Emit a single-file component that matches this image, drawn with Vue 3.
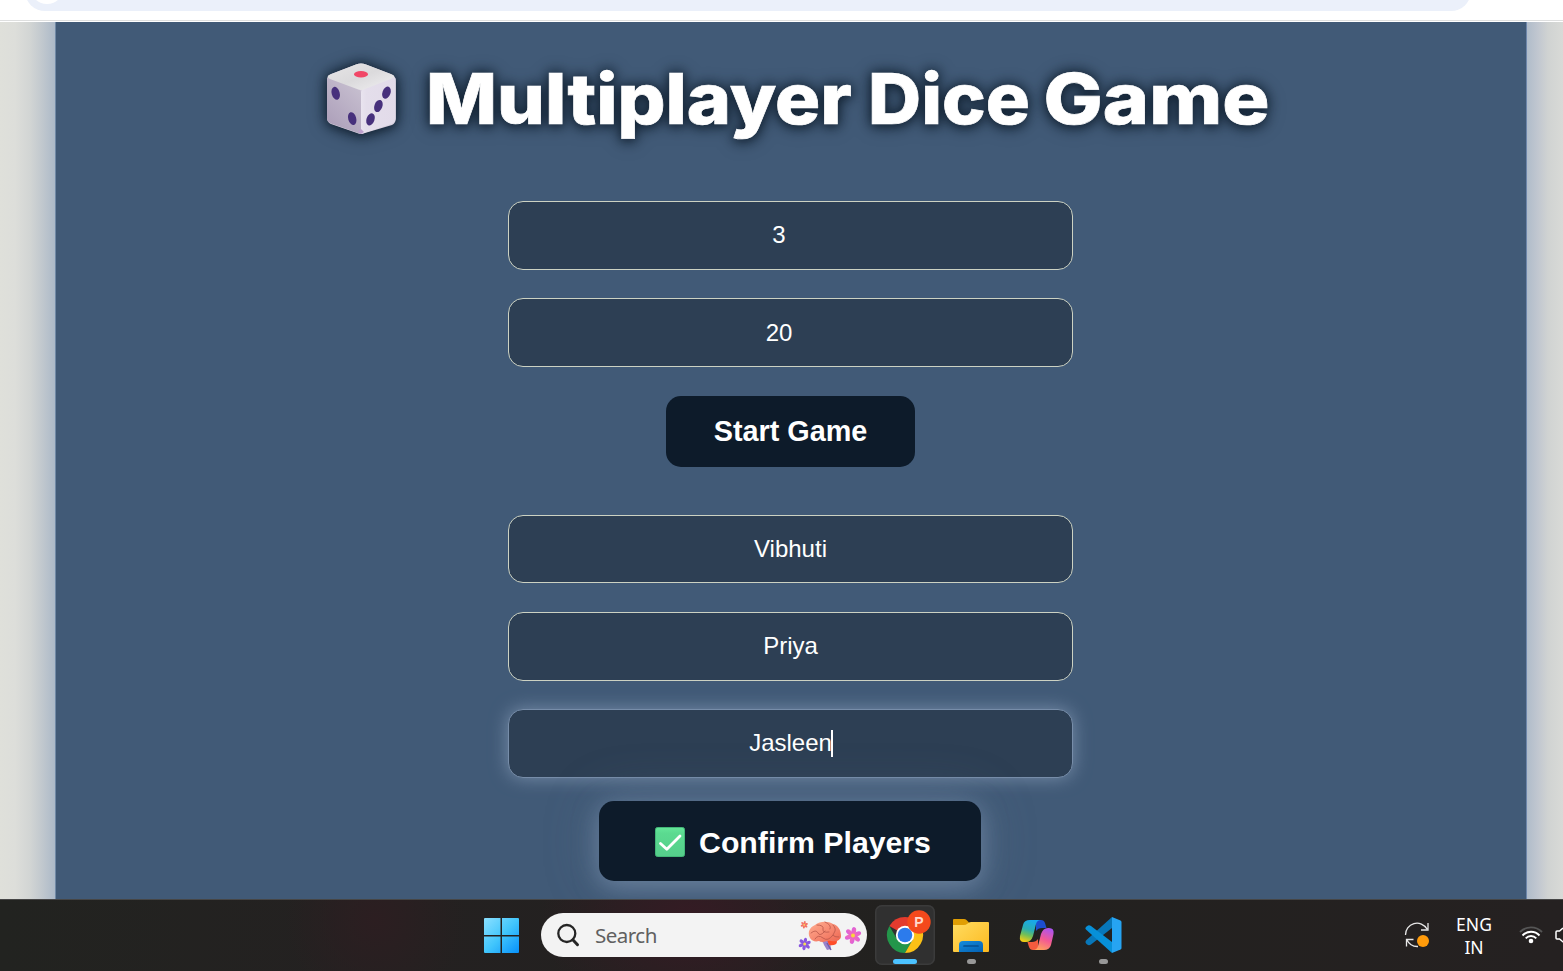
<script setup>
const settings = ['3', '20']
const players = ['Vibhuti', 'Priya', 'Jasleen']
</script>

<template>
  <div class="screen">
    <header class="browser"><div class="omnibox"><i class="site-info"></i></div></header>

    <main class="page">
      <div class="edge left"></div>
      <section class="game">
        <h1 class="title">
          <svg width="960" height="110" viewBox="320 40 960 110">
            <defs>
              <linearGradient id="dTop" x1="0" y1="0" x2="1" y2="1"><stop offset="0" stop-color="#e6e5e6"/><stop offset=".5" stop-color="#dbdadc"/><stop offset="1" stop-color="#f1f0f2"/></linearGradient>
              <linearGradient id="dLeft" x1="1" y1="0" x2=".4" y2="1"><stop offset="0" stop-color="#cbc4d3"/><stop offset="1" stop-color="#aea1bb"/></linearGradient>
              <linearGradient id="dRight" x1="0" y1="0" x2="1" y2="0"><stop offset="0" stop-color="#e9e4ef"/><stop offset=".15" stop-color="#e4deeb"/><stop offset="1" stop-color="#e2dbe9"/></linearGradient>
            </defs>
            <g class="die">
              <path d="M331 74 356 64.500Q361 62.500 366 64.500L391 74Q395.700 76 395.700 81V119Q395.700 123 392 125L365 133Q361 135 357 133L331 124Q327 122 327 118V80Q327 76 331 74Z" fill="#d8d1df"/>
              <path d="M327 79Q327 77 329 77L358 87.500Q361 89 361 93V134L331 123.500Q327 122 327 118Z" fill="url(#dLeft)"/>
              <path d="M395.700 79Q395.700 77 393 77L364 88Q361 89.500 361 93V134L391 124Q395.700 122 395.700 118Z" fill="url(#dRight)"/>
              <path d="M329 75 356 64.500Q361 62.500 366 64.500L393 75Q396 77 392 78.500L365 89Q361 91 357 89L330 79Q326 77 329 75Z" fill="url(#dTop)"/>
              <path d="M358 131.500 361 129 364 132 361 134Z" fill="#bda0cd"/>
              <ellipse cx="361" cy="74.300" rx="7" ry="3.200" fill="#f14767"/>
              <g fill="#47307c">
                <ellipse cx="335.700" cy="93.300" rx="4" ry="6.600" transform="rotate(-16 335.700 93.300)"/>
                <ellipse cx="352.200" cy="118.600" rx="4" ry="6.600" transform="rotate(-16 352.200 118.600)"/>
                <ellipse cx="386.500" cy="92.700" rx="4" ry="6.300" transform="rotate(20 386.500 92.700)"/>
                <ellipse cx="378.400" cy="106" rx="4" ry="6.300" transform="rotate(20 378.400 106)"/>
                <ellipse cx="370.500" cy="119.300" rx="4" ry="6.300" transform="rotate(20 370.500 119.300)"/>
              </g>
            </g>
            <g class="words">
              <text x="426" y="124" textLength="426" lengthAdjust="spacingAndGlyphs">Multiplayer</text>
              <text x="868" y="124" textLength="162" lengthAdjust="spacingAndGlyphs">Dice</text>
              <text x="1043.500" y="124" textLength="226" lengthAdjust="spacingAndGlyphs">Game</text>
            </g>
          </svg>
        </h1>

        <div class="group settings">
          <div v-for="s in settings" :key="s" class="field number">{{ s }}</div>
        </div>
        <button class="btn start">Start Game</button>
        <div class="group players">
          <div v-for="(p, i) in players" :key="p" class="field" :class="{ focused: i === 2 }">{{ p }}<i v-if="i === 2" class="caret"></i></div>
        </div>
        <button class="btn confirm">
          <svg width="30" height="30" viewBox="0 0 30 30">
            <defs><linearGradient id="ck" x1="0" y1="0" x2="0" y2="1"><stop offset="0" stop-color="#65e699"/><stop offset=".2" stop-color="#5bda90"/><stop offset="1" stop-color="#55ce8b"/></linearGradient></defs>
            <rect x=".5" y=".5" width="29" height="29" rx="2" fill="url(#ck)" stroke="#43b878"/>
            <path d="M5.500 16.500 11.800 22.300 25 9" fill="none" stroke="#fff" stroke-width="2.800" stroke-linecap="round" stroke-linejoin="round"/>
          </svg>
          <span>Confirm Players</span>
        </button>
      </section>
      <div class="edge right"></div>
    </main>

    <footer class="taskbar">
      <svg class="windows" width="35" height="35" viewBox="0 0 35 35">
        <defs><linearGradient id="win" gradientUnits="userSpaceOnUse" x1="0" y1="0" x2="35" y2="35"><stop stop-color="#8be0ff"/><stop offset=".5" stop-color="#42c6fc"/><stop offset="1" stop-color="#0791fa"/></linearGradient></defs>
        <path fill="url(#win)" d="M1 0H16.500V17H0V1Q0 0 1 0ZM18 0H34Q35 0 35 1V17H18ZM0 18.500H16.500V35H1Q0 35 0 34ZM18 18.500H35V34Q35 35 34 35H18Z"/>
      </svg>

      <div class="search">
        <svg width="24" height="25" viewBox="0 0 24 25"><circle cx="9.800" cy="10.500" r="8.500" fill="none" stroke="#252525" stroke-width="2.300"/><path d="M15.800 16.800 20.500 21.700" stroke="#252525" stroke-width="3" stroke-linecap="round"/></svg>
        <span>Search</span>
        <svg class="brain" width="64" height="32" viewBox="798 919 64 32">
          <defs>
            <linearGradient id="brn" x1="0" y1="0" x2="1" y2="1"><stop stop-color="#ffae91"/><stop offset=".6" stop-color="#f5836c"/><stop offset="1" stop-color="#ee654f"/></linearGradient>
            <linearGradient id="pk" x1="0" y1="0" x2="1" y2="1"><stop stop-color="#d65ce3"/><stop offset="1" stop-color="#fb6fae"/></linearGradient>
            <g id="flower"><ellipse v-for="n in 6" :key="n" cx="0" cy="-4.700" rx="2.300" ry="3.800" :transform="`rotate(${n * 60 + 10})`"/></g>
          </defs>
          <path d="M822 940 830 941 831 949 827 950 824 945Z" fill="#9a83cc"/><path d="M827 943 831 950" stroke="#715da9" stroke-width="1.500"/>
          <path d="M827 940Q837 938 837 942 836 946 829 945Z" fill="#ff4d29"/>
          <path d="M810 938C807 932 810 927 815 925 820 921 828 921 833 924 838 925 841 930 841 936 841 940 837 942 831 941 825 940 824 944 819 941 815 942 812 941 810 938Z" fill="url(#brn)"/>
          <path d="M811 933Q816 929 818 933T825 931M817 925Q824 925 823 929T829 932M825 922Q832 925 830 929M833 925Q837 929 834 933T839 937M815 939Q818 934 823 938T833 935" stroke="#b9574a" stroke-width=".8" fill="none" stroke-linecap="round"/>
          <use href="#flower" fill="url(#pk)" transform="translate(853 935.500)"/><circle cx="853" cy="935.500" r="2" fill="#f8d73c"/>
          <use href="#flower" fill="#8956de" transform="translate(804.700 944) scale(.75)"/><circle cx="804.700" cy="944" r="1.500" fill="#f5dc55"/>
          <use href="#flower" fill="#f37366" transform="translate(804.300 924.800) scale(.45)"/><circle cx="804.300" cy="924.800" r=".9" fill="#f9d052"/>
        </svg>
      </div>

      <div class="tile">
        <svg width="60" height="60" viewBox="875 905 60 60">
          <path d="M905 935 889.400 926A18 18 0 0 1 920.600 926Z" fill="#e33b2e"/>
          <path d="M889.400 926A18 18 0 0 0 905 953L913 939.500 905 935 897.200 939.500Z" fill="#23964a"/>
          <path d="M905 926H920.600A18 18 0 0 1 905 953L912.800 939.500Z" fill="#fbc116"/>
          <circle cx="905" cy="935" r="9.200" fill="#fff"/><circle cx="905" cy="935" r="7.300" fill="#2c7bec"/>
          <circle cx="919" cy="922" r="11.700" fill="#f4491c"/>
          <text x="919" y="927" text-anchor="middle" class="badge">P</text>
          <rect x="893" y="959" width="24" height="5" rx="2.500" fill="#4cc2ff"/>
        </svg>
      </div>

      <svg class="folder" width="37" height="48" viewBox="953 918 37 48">
        <defs><linearGradient id="fo" x1="0" y1="0" x2="1" y2="1"><stop stop-color="#ffdc61"/><stop offset="1" stop-color="#fcb91f"/></linearGradient><linearGradient id="fb" x1="0" y1="0" x2="1" y2="1"><stop stop-color="#168cdc"/><stop offset="1" stop-color="#0360b2"/></linearGradient></defs>
        <path d="M953 920Q953 919 954 919H964Q965.500 919 966.500 920L969 922.500V930H953Z" fill="#e09e04"/>
        <path d="M953 925H964Q966 925 967 924L969 922.500Q970 922 971 922H988Q989 922 989 923V951Q989 952 988 952H954Q953 952 953 951Z" fill="url(#fo)"/>
        <path d="M959 952V945Q959 941 963 941H979Q983 941 983 945V952Z" fill="url(#fb)"/><path d="M964 946H978" stroke="#064f91" stroke-width="1.700" stroke-linecap="round"/>
        <rect x="967" y="959" width="9" height="5" rx="2.500" fill="#989898"/>
      </svg>

      <svg class="copilot" width="36" height="34" viewBox="1019 918 36 34">
        <defs>
          <linearGradient id="ca" x1=".6" y1="0" x2=".3" y2="1"><stop stop-color="#18a8ed"/><stop offset=".45" stop-color="#2aaeb2"/><stop offset=".7" stop-color="#70bf59"/><stop offset="1" stop-color="#f3cd12"/></linearGradient>
          <linearGradient id="cb" x1=".7" y1="0" x2=".3" y2="1"><stop stop-color="#ac54ef"/><stop offset=".5" stop-color="#f35994"/><stop offset="1" stop-color="#ffa35b"/></linearGradient>
        </defs>
        <path d="M1036 920H1041Q1044 920 1045 923L1046.500 928H1042Q1038 928 1036 931Z" fill="#1c4ecf"/>
        <path d="M1038 950H1033Q1030 950 1029 947L1027.500 942H1032Q1036 942 1038 939Z" fill="#f45b3e"/>
        <path d="M1030 920H1041Q1037 920 1036 924L1033 936Q1031 942 1026 942H1024Q1019 942 1020 936L1023 925Q1024 920 1030 920Z" fill="url(#ca)"/>
        <path d="M1044 950H1033Q1037 950 1038 946L1041 934Q1043 928 1048 928H1049Q1054.500 928 1053.500 934L1051 945Q1049.500 950 1044 950Z" fill="url(#cb)"/>
      </svg>

      <svg class="code" width="38" height="50" viewBox="1085 916 38 50">
        <path d="M1112 917 1086.500 940Q1084.500 942 1086.500 944L1088 945Q1089.500 945.500 1091 944.500L1112 928Z" fill="#0877b9"/>
        <path d="M1112 953 1086.500 930Q1084.500 928 1086.500 926.500L1088 925.500Q1089.500 925 1091 926L1112 942Z" fill="#0790d8"/>
        <path d="M1112 917 1120.500 920.500Q1121.500 921 1121.500 922V948Q1121.500 949 1120.500 949.500L1112 953Z" fill="#26a4f2"/>
        <rect x="1099" y="959" width="9" height="5" rx="2.500" fill="#989898"/>
      </svg>

      <svg class="sync" width="28" height="28" viewBox="1403 921 28 28"><path d="M1405.500 935A11.500 11.500 0 0 1 1427 929M1428 923V930H1421M1406.500 946.500V939.500H1413.500M1407 940A11.500 11.500 0 0 0 1418 946.500" fill="none" stroke="#e8e8e8" stroke-width="1.300"/><circle cx="1423" cy="941" r="6" fill="#ff9b0b"/></svg>
      <div class="lang">ENG<br>IN</div>
      <svg class="tray" width="45" height="30" viewBox="1518 920 45 30">
        <g fill="none" stroke-width="1.900"><path d="M1520 932A15.500 15.500 0 0 1 1542 932" stroke="#555"/><path d="M1522.500 935.500A11.600 11.600 0 0 1 1539.500 935.500M1525.700 938.300A7.300 7.300 0 0 1 1536.300 938.300" stroke="#fff"/></g><circle cx="1531" cy="941" r="2.300" fill="#fff"/>
        <path d="M1563 928 1559.500 931H1557Q1556 931 1556 932V938Q1556 939 1557 939H1559.500L1565 943.500" fill="none" stroke="#fff" stroke-width="1.500"/>
      </svg>
    </footer>
  </div>
</template>

<style>
body { margin: 0; overflow: hidden; }
</style>

<style scoped>
.screen { width: 1563px; height: 971px; overflow: hidden; display: flex; flex-direction: column; font-family: "Liberation Sans", Arial, sans-serif; background: #fff; }
.browser { height: 22px; flex: none; box-sizing: border-box; background: linear-gradient(#fff 20px, #dedfdf 20px, #dedfdf 21px, #fff 21px); overflow: hidden; }
.omnibox { width: 1446px; height: 40px; margin: -29px 0 0 25px; border-radius: 20px; background: #ebf0fa; display: flow-root; }
.site-info { display: block; width: 34px; height: 34px; border-radius: 50%; background: #fff; margin: -1px 0 0 5px; }
.page { height: 877px; flex: none; display: flex; }
.edge.left { width: 55px; background: linear-gradient(90deg, #dfe0da 0, #dddeda 15px, #d2d5d4 30px, #c1c8ce 42px, #acb9c8 55px); }
.edge.right { width: 36px; background: linear-gradient(90deg, #b0bcca 0, #c1c7d0 11px, #d0d3d2 21px, #d9dad7 36px); }
.game { width: 1472px; box-sizing: border-box; border-left: 1px solid #7089a6; border-right: 1px solid #6d86aa; padding-right: 1px; background: #415a77; display: flex; flex-direction: column; align-items: center; overflow: hidden; }
.title { margin: 18px 0 0 19px; height: 110px; }
.title svg { display: block; overflow: visible; }
.words, .die { filter: drop-shadow(0 0 7px rgba(13, 27, 42, .8)) drop-shadow(0 2px 5px rgba(13, 27, 42, .6)); }
.words text { font: 800 70px Inter, sans-serif; fill: #fff; stroke: #fff; stroke-width: .7px; }
.group { display: flex; flex-direction: column; gap: 28px; }
.settings { margin-top: 51px; }
.field { width: 565px; height: 69px; box-sizing: border-box; border: 1px solid #ccd2c3; border-radius: 15px; background: #2d3f54; color: #fff; font-size: 24px; display: flex; align-items: center; justify-content: center; padding-bottom: 1px; }
.number { padding-right: 23px; }
.number + .number { padding-bottom: 0; }
.players { margin-top: 48px; }
.players .field:first-child { height: 68px; margin-bottom: 1px; }
.focused { border-color: #778da9; box-shadow: 0 0 18px #778da9; position: relative; }
.caret { width: 2px; height: 27px; background: #fff; margin: 0 -1px 0 -1px; }
.btn { border: 0; padding: 0; color: #fff; background: #0d1b2a; font: bold 28.800px "Liberation Sans", Arial, sans-serif; display: flex; align-items: center; justify-content: center; flex: none; }
.start { width: 249px; height: 71px; margin-top: 29px; border-radius: 15px; }
.start { padding-bottom: 1px; }
.confirm { width: 382px; height: 80px; margin-top: 23px; margin-right: 1px; border-radius: 15px; font-size: 30.240px; box-shadow: 0 5px 25px rgba(119, 141, 169, .75), 0 0 55px rgba(119, 141, 169, .25); position: relative; padding: 2px 0 0 6px; box-sizing: border-box; gap: 14px; }
.confirm span { margin-top: 1px; }
.taskbar { height: 72px; flex: none; box-sizing: border-box; border-top: 1px solid #464646; padding-left: 484px; display: flex; align-items: flex-start; background: radial-gradient(ellipse 150px 110px at 690px 20px, #351b24, transparent), radial-gradient(ellipse 90px 90px at 375px 20px, #2c1e21, transparent), linear-gradient(90deg, #222320, #242121 25%, #22211f 60%, #252121); font-family: "Open Sans", "Noto Sans", sans-serif; }
.taskbar > * { flex: none; }
.windows { margin-top: 18px; }
.search { margin: 13px 0 0 22px; width: 326px; height: 44px; border-radius: 22px; background: #f3f3f3; display: flex; align-items: center; color: #606060; font: 20.500px "Noto Sans", sans-serif; letter-spacing: -.5px; box-sizing: border-box; padding: 0 5px 0 16px; }
.search span { margin-left: 14px; }
.brain { margin-left: auto; }
.tile { width: 60px; height: 60px; box-sizing: border-box; margin: 5px 0 0 8px; border-radius: 7px; background: #303030; box-shadow: inset 0 0 0 1.500px #3b3b3b; }
.tile svg { display: block; }
.badge { font: bold 14px "Liberation Sans", sans-serif; fill: #ffd9cd; }
.folder { margin: 18px 0 0 18px; }
.copilot { margin: 18px 0 0 29px; }
.code { margin: 16px 0 0 30px; }
.sync { margin: 21px 0 0 280px; }
.lang { margin: 13px 0 0 18px; width: 50px; text-align: center; color: #fff; font: 17.500px/23px "Noto Sans", sans-serif; }
.tray { margin: 20px 0 0 19px; }
</style>
